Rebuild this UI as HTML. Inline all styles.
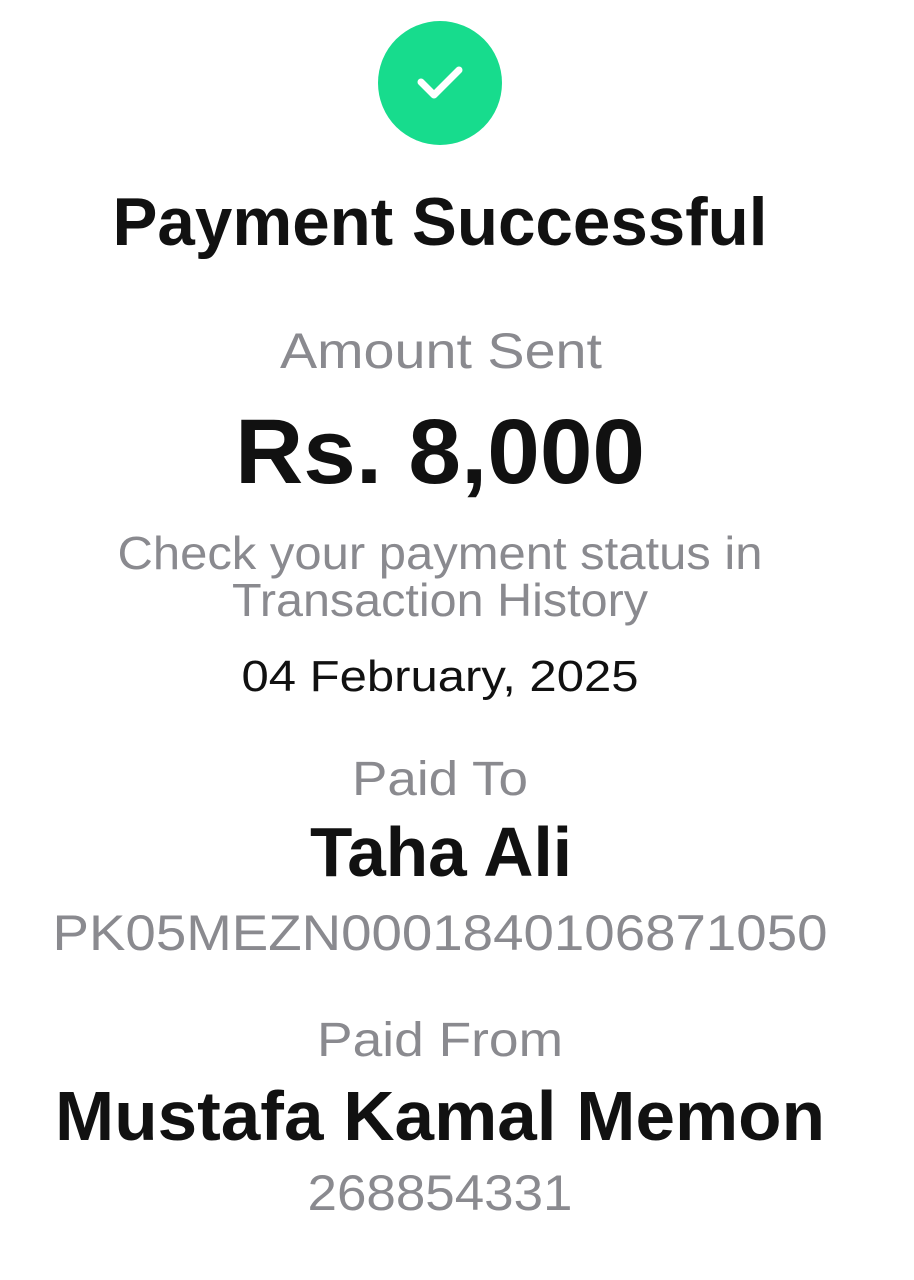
<!DOCTYPE html>
<html><head><meta charset="utf-8"><style>
html,body{margin:0;padding:0;background:#fff;width:914px;height:1280px;overflow:hidden}
svg{display:block}
text{font-family:"Liberation Sans",sans-serif;text-anchor:middle}
.b{font-weight:bold;fill:#111}
.g{fill:#8a8a8f}
.k{fill:#111}
</style></head><body>
<svg width="914" height="1280" viewBox="0 0 914 1280">
<circle cx="440" cy="83" r="62" fill="#17dc8d"/>
<path d="M421 82 L434 95 L459 70" stroke="#fff" stroke-width="7" fill="none" stroke-linecap="round" stroke-linejoin="round"/>
<text class="b" x="440" y="245" font-size="68" textLength="655" lengthAdjust="spacingAndGlyphs">Payment Successful</text>
<text class="g" x="441" y="368" font-size="50" textLength="322" lengthAdjust="spacingAndGlyphs">Amount Sent</text>
<text class="b" x="440" y="483" font-size="92" textLength="410" lengthAdjust="spacingAndGlyphs">Rs. 8,000</text>
<text class="g" x="440" y="569" font-size="46" textLength="645" lengthAdjust="spacingAndGlyphs">Check your payment status in</text>
<text class="g" x="440" y="616" font-size="46" textLength="416" lengthAdjust="spacingAndGlyphs">Transaction History</text>
<text class="k" x="440" y="691" font-size="44" textLength="397" lengthAdjust="spacingAndGlyphs">04 February, 2025</text>
<text class="g" x="440" y="795" font-size="48" textLength="176" lengthAdjust="spacingAndGlyphs">Paid To</text>
<text class="b" x="441" y="876" font-size="70" textLength="262" lengthAdjust="spacingAndGlyphs">Taha Ali</text>
<text class="g" x="440" y="950" font-size="50" textLength="775" lengthAdjust="spacingAndGlyphs">PK05MEZN0001840106871050</text>
<text class="g" x="440" y="1056" font-size="48" textLength="246" lengthAdjust="spacingAndGlyphs">Paid From</text>
<text class="b" x="440" y="1140" font-size="70" textLength="770" lengthAdjust="spacingAndGlyphs">Mustafa Kamal Memon</text>
<text class="g" x="440" y="1210" font-size="50" textLength="265" lengthAdjust="spacingAndGlyphs">268854331</text>
</svg>
</body></html>
